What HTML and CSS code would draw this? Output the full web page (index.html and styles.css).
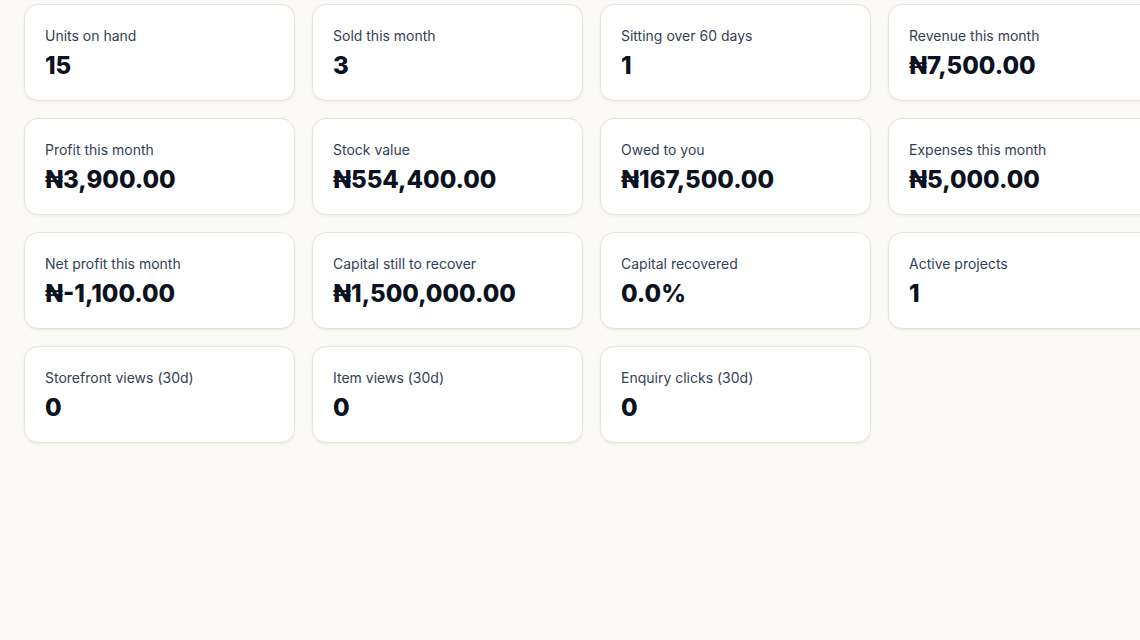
FILE: index.html
```html
<!DOCTYPE html>
<html lang="en">
<head>
  <meta charset="UTF-8">
  <meta name="viewport" content="width=device-width, initial-scale=1.0">
  <title>Dashboard</title>
  <link rel="stylesheet" href="styles.css">
</head>
<body>
  <div class="stats">
    <div class="card"><div class="label">Units on hand</div><div class="value">15</div></div>
    <div class="card"><div class="label">Sold this month</div><div class="value">3</div></div>
    <div class="card"><div class="label">Sitting over 60 days</div><div class="value">1</div></div>
    <div class="card"><div class="label">Revenue this month</div><div class="value">₦7,500.00</div></div>

    <div class="card"><div class="label">Profit this month</div><div class="value">₦3,900.00</div></div>
    <div class="card"><div class="label">Stock value</div><div class="value">₦554,400.00</div></div>
    <div class="card"><div class="label">Owed to you</div><div class="value">₦167,500.00</div></div>
    <div class="card"><div class="label">Expenses this month</div><div class="value">₦5,000.00</div></div>

    <div class="card"><div class="label">Net profit this month</div><div class="value">₦-1,100.00</div></div>
    <div class="card"><div class="label">Capital still to recover</div><div class="value">₦1,500,000.00</div></div>
    <div class="card"><div class="label">Capital recovered</div><div class="value">0.0%</div></div>
    <div class="card"><div class="label">Active projects</div><div class="value">1</div></div>

    <div class="card"><div class="label">Storefront views (30d)</div><div class="value">0</div></div>
    <div class="card"><div class="label">Item views (30d)</div><div class="value">0</div></div>
    <div class="card"><div class="label">Enquiry clicks (30d)</div><div class="value">0</div></div>
  </div>
</body>
</html>
```

FILE: styles.css
```css
html, body {
  overflow: hidden;
}
body {
  margin: 0;
  padding: 4px 24px 24px;
  background: #fbfaf6;
  font-family: 'Inter', 'Noto Sans', sans-serif;
  color: #0f172a;
}
.stats {
  display: grid;
  grid-template-columns: repeat(4, 271px);
  gap: 17px;
}
.card {
  background: #fff;
  border: 1px solid #e8e3da;
  border-radius: 14px;
  box-shadow: 0 1px 3px rgba(60, 50, 30, 0.08);
  padding: 20px 20px 18px;
  height: 97px;
  box-sizing: border-box;
}
.label {
  font-size: 14px;
  line-height: 21px;
  color: #334155;
}
.value {
  margin-top: 5px;
  font-size: 24px;
  line-height: 30px;
  font-weight: 800;
  color: #0b1220;
}
```
